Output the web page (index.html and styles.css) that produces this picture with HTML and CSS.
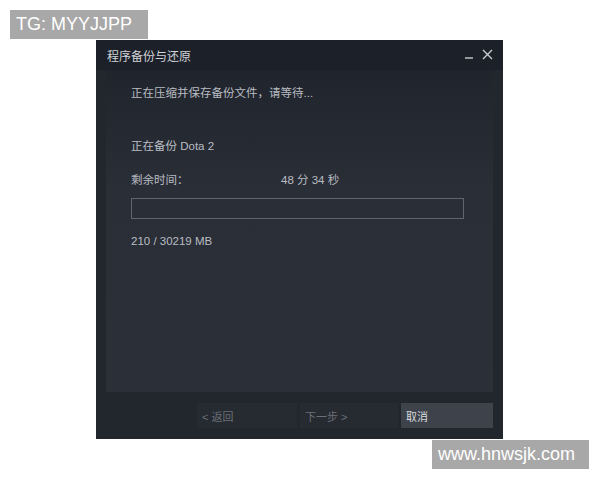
FILE: index.html
```html
<!DOCTYPE html>
<html lang="zh-CN">
<head>
    <meta charset="UTF-8">
    <meta name="viewport" content="width=device-width, initial-scale=1.0">
    <title>程序备份与还原</title>
    <link rel="stylesheet" href="styles.css">
</head>
<body>
    <div class="tag tag-top">TG: MYYJJPP</div>

    <div class="dialog">
        <div class="titlebar">
            <span class="title">程序备份与还原</span>
            <div class="controls">
                <svg width="10" height="10" viewBox="0 0 10 10"><path d="M1 9h8" stroke="#c9ccd1" stroke-width="1.4"/></svg>
                <svg width="11" height="11" viewBox="0 0 11 11"><path d="M1 1l9 9M10 1l-9 9" stroke="#c9ccd1" stroke-width="1.4"/></svg>
            </div>
        </div>

        <div class="panel">
            <p class="line status">正在压缩并保存备份文件，请等待...</p>
            <p class="line game">正在备份 Dota 2</p>
            <div class="line time">
                <span class="label">剩余时间：</span>
                <span>48 分 34 秒</span>
            </div>
            <div class="progress"></div>
            <p class="line size">210 / 30219 MB</p>
        </div>

        <div class="footer">
            <button class="btn off back">&lt; 返回</button>
            <button class="btn off next">下一步 &gt;</button>
            <button class="btn cancel">取消</button>
        </div>
    </div>

    <div class="tag tag-bottom">www.hnwsjk.com</div>
</body>
</html>
```

FILE: styles.css
```css
body{
    margin: 0;
    background: #ffffff;
    font-family: "Liberation Sans", "Noto Sans CJK SC", sans-serif;
    position: relative;
    width: 600px;
    height: 480px;
    overflow: hidden;
}
.tag{
    position: absolute;
    background: #a8a8a8;
    color: #ffffff;
    font-size: 18px;
    line-height: 29px;
    padding: 0 6px;
}
.tag-top{
    left: 10px;
    top: 10px;
    width: 126px;
}
.tag-bottom{
    left: 432px;
    top: 440px;
    width: 145px;
}
.dialog{
    margin: 40px 0 0 96px;
    width: 407px;
    height: 399px;
    background: #22262d;
    display: flex;
    flex-direction: column;
}
.titlebar{
    height: 30px;
    display: flex;
    align-items: center;
    justify-content: space-between;
    padding: 0 10px 0 11px;
    background: #1c2028;
}
.title{
    color: #d0d3d8;
    font-size: 12px;
}
.controls{
    display: flex;
    gap: 8px;
    align-items: center;
    margin-top: -2px;
}
.panel{
    margin: 0 10px 0 10px;
    height: 322px;
    padding: 0 0 0 25px;
    background: linear-gradient(#20242c 0px, #2a2e37 120px, #2b2f38 100%);
}
.line{
    margin: 0;
    color: #b9bdc3;
    font-size: 11.5px;
    line-height: 16px;
}
.status{
    padding-top: 15px;
}
.game{
    margin-top: 37px;
}
.time{
    margin-top: 18px;
    display: flex;
}
.label{
    width: 150px;
}
.progress{
    margin-top: 10px;
    width: 331px;
    height: 19px;
    border: 1px solid #60656c;
    background: #2a2e36;
}
.size{
    margin-top: 14px;
}
.footer{
    display: flex;
    justify-content: flex-end;
    gap: 3px;
    padding: 11px 10px 0 0;
}
.btn{
    height: 25px;
    border: none;
    font-family: inherit;
    font-size: 11px;
    text-align: left;
    padding: 0 5px;
}
.off{
    background: #262a31;
    color: #6b7078;
}
.back{
    width: 100px;
}
.next{
    width: 98px;
}
.cancel{
    width: 92px;
    background: #3d424b;
    color: #d6d9dd;
}
```
